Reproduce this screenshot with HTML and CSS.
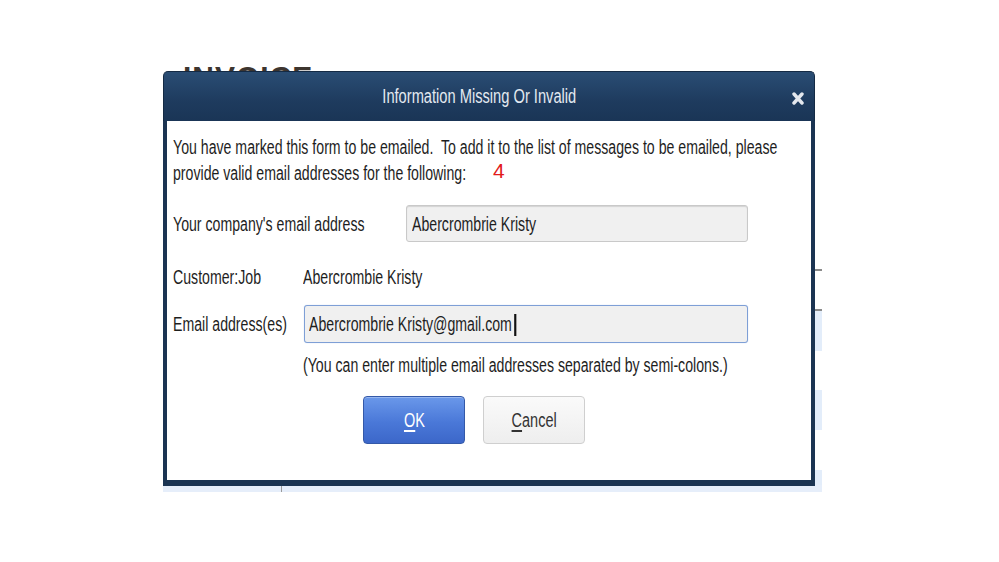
FILE: index.html
```html
<!DOCTYPE html>
<html>
<head>
<meta charset="utf-8">
<link rel="stylesheet" href="styles.css">
</head>
<body>
<div class="desk">
  <div class="backwin">
    <div class="back-title">INVOICE</div>
    <div class="back-tick t1"></div>
    <div class="back-tick t2"></div>
    <div class="back-fill f1"></div>
    <div class="back-fill f2"></div>
    <div class="back-fill f3"></div>
    <div class="back-bottom"><span class="back-sep"></span></div>
  </div>

  <div class="dialog">
    <div class="titlebar">
      <span class="title">Information Missing Or Invalid</span>
      <svg class="close" width="12" height="13" viewBox="0 0 12 13"><path d="M2 2 L10 11 M10 2 L2 11" stroke="#e4e8ee" stroke-width="3.4" stroke-linecap="round"/></svg>
    </div>
    <div class="body">
      <div class="msg">
        <div class="line"><span class="sx">You have marked this form to be emailed.&nbsp; To add it to the list of messages to be emailed, please</span></div>
        <div class="line"><span class="sx">provide valid email addresses for the following:</span></div>
        <span class="num">4</span>
      </div>

      <div class="row row-company">
        <div class="label lw1"><span class="sx">Your company's email address</span></div>
        <div class="field f-company"><span class="sx">Abercrombrie Kristy</span></div>
      </div>

      <div class="row row-cust">
        <div class="label lw2"><span class="sx">Customer:Job</span></div>
        <div class="value"><span class="sx">Abercrombie Kristy</span></div>
      </div>

      <div class="row row-email">
        <div class="label lw3"><span class="sx">Email address(es)</span></div>
        <div class="field f-email"><span class="sx">Abercrombrie Kristy@gmail.com<span class="caret"></span></span></div>
      </div>

      <div class="hint"><span class="sx">(You can enter multiple email addresses separated by semi-colons.)</span></div>

      <div class="buttons">
        <button class="btn btn-ok"><span class="sx sc"><u>O</u>K</span></button>
        <button class="btn btn-cancel"><span class="sx sc"><u>C</u>ancel</span></button>
      </div>
    </div>
  </div>
</div>
</body>
</html>
```

FILE: styles.css
```css
html, body {
  margin: 0;
  padding: 0;
  background: #ffffff;
}

body {
  width: 999px;
  height: 562px;
  overflow: hidden;
  font-family: "Liberation Sans", Arial, sans-serif;
  color: #1e1e1e;
}

.desk {
  position: relative;
  width: 999px;
  height: 562px;
}

/* condensed text run (narrow UI font) */
.sx {
  display: inline-block;
  white-space: nowrap;
  transform: scaleX(0.725);
  transform-origin: 0 50%;
}
.sc {
  transform-origin: 50% 50%;
}

/* window lying behind the dialog */
.backwin {
  position: absolute;
  left: 163px;
  top: 55px;
  width: 659px;
  height: 437px;
}

.back-title {
  position: absolute;
  left: 20px;
  top: 7px;
  font-weight: bold;
  font-size: 30px;
  letter-spacing: 1px;
  color: #3d352f;
  line-height: 1;
}

.back-tick {
  position: absolute;
  left: 650px;
  width: 9px;
  height: 2px;
  background: #8a8a8a;
}
.back-tick.t1 { top: 214px; }
.back-tick.t2 { top: 254px; }

.back-fill {
  position: absolute;
  left: 650px;
  width: 9px;
  background: #e3edfa;
}
.back-fill.f1 { top: 256px; height: 40px; }
.back-fill.f2 { top: 335px; height: 40px; }
.back-fill.f3 { top: 415px; height: 22px; }

.back-bottom {
  position: absolute;
  left: 0;
  top: 430px;
  width: 659px;
  height: 7px;
  background: #e6eefa;
}
.back-sep {
  position: absolute;
  left: 118px;
  top: 0;
  width: 1px;
  height: 7px;
  background: #9a9a9a;
}

/* dialog */
.dialog {
  position: absolute;
  left: 163px;
  top: 71px;
  width: 652px;
  height: 415px;
  display: flex;
  flex-direction: column;
}

.titlebar {
  height: 50px;
  flex: none;
  box-sizing: border-box;
  border: 1px solid #142a44;
  border-bottom: none;
  border-radius: 5px 5px 0 0;
  background: linear-gradient(#2a4d74, #1e3b5e 60%, #1a3556);
  display: flex;
  align-items: center;
  justify-content: center;
  position: relative;
  padding-right: 20px;
}

.title {
  font-size: 20px;
  color: #e3e9f0;
  white-space: nowrap;
  display: inline-block;
  transform: scaleX(0.733);
  transform-origin: 50% 50%;
}

.close {
  position: absolute;
  right: 10px;
  top: 20px;
}

.body {
  flex: 1;
  background: #ffffff;
  border-left: 4px solid #1b3452;
  border-right: 4px solid #1b3452;
  border-bottom: 6px solid #1b3452;
  padding: 13px 0 0 6px;
  font-size: 19.5px;
  line-height: 26px;
}

.msg {
  position: relative;
}

.line {
  height: 26px;
}

.num {
  position: absolute;
  left: 320px;
  top: 24px;
  color: #e21b1b;
  font-size: 21px;
}

.row {
  display: flex;
  align-items: center;
}

.row-company {
  margin-top: 19px;
}
.row-cust {
  margin-top: 22px;
  height: 26px;
}
.row-email {
  margin-top: 15px;
}

.label { flex: none; }
.lw1 { width: 233px; }
.lw2 { width: 130px; }
.lw3 { width: 131px; }

.field {
  flex: none;
  box-sizing: border-box;
  background: #f0f0f0;
  border-radius: 3px;
  display: flex;
  align-items: center;
  padding-left: 5px;
  overflow: hidden;
}

.f-company {
  width: 342px;
  height: 37px;
  border: 1px solid #c9c9c9;
  box-shadow: inset 0 1px 1px rgba(0, 0, 0, 0.12);
}

.f-email {
  width: 444px;
  height: 38px;
  border: 1px solid #7e9fd6;
  box-shadow: 0 0 1px #a9c2ea;
  padding-left: 4px;
}

.caret {
  display: inline-block;
  width: 3px;
  height: 22px;
  background: #111;
  margin-left: 3px;
  vertical-align: -5px;
}

.hint {
  margin: 9px 0 0 130px;
  height: 26px;
}

.buttons {
  display: flex;
  gap: 18px;
  margin: 18px 0 0 190px;
}

.btn {
  width: 102px;
  height: 48px;
  box-sizing: border-box;
  border-radius: 4px;
  font-family: inherit;
  font-size: 20px;
  padding: 0;
  cursor: default;
}

.btn u {
  text-underline-offset: 3px;
}

.btn-ok {
  background: linear-gradient(#6a98ea, #4a78d8 55%, #3c67c9);
  border: 1px solid #3459a8;
  color: #ffffff;
  box-shadow: inset 0 1px 0 rgba(255, 255, 255, 0.3);
}

.btn-cancel {
  background: linear-gradient(#fafafa, #eeeeee);
  border: 1px solid #cfcfcf;
  color: #333333;
}
```
